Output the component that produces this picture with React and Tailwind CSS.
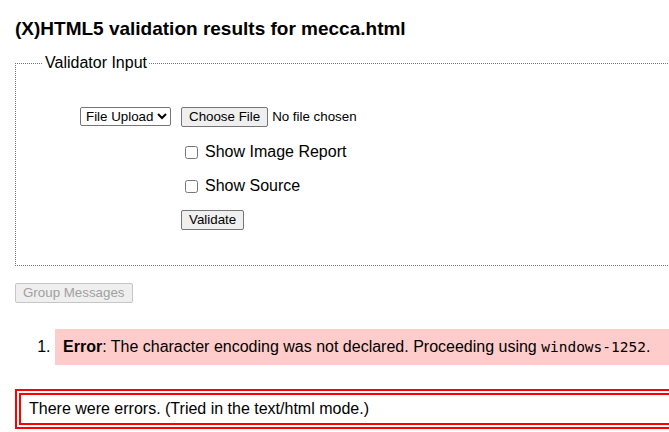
import React from 'react';

const App = () => {
  return (
    <div className="w-[669px] h-[432px] overflow-hidden bg-white text-black font-['Liberation_Sans',Arial,sans-serif]">
      <div className="w-[780px] pl-[15px]">
        {/* Titulo */}
        <h2 className="pt-[18px] text-[19px] leading-[22px] font-bold">(X)HTML5 validation results for mecca.html</h2>

        {/* Validator Input */}
        <fieldset className="mt-[14px] border border-dotted border-[#767676]">
          <legend className="ml-[27px] px-[2px] text-[16px] leading-[18px]">Validator Input</legend>
          <div className="pt-[35px] pb-[35px] pl-[64px] flex flex-col text-[13.33px]">
            <div className="flex items-start h-[20px]">
              <div className="w-[101px]">
                <select className="h-[19px] border border-[#767676] rounded-[2px] bg-white text-[13.33px] pl-[1px]">
                  <option>File Upload</option>
                </select>
              </div>
              <button className="h-[20px] px-[7px] border border-[#767676] rounded-[2px] bg-[#efefef] leading-[16px]">Choose File</button>
              <span className="ml-[4px] leading-[20px]">No file chosen</span>
            </div>
            <label className="mt-[16px] ml-[101px] flex items-center h-[18px] text-[16px]">
              <input type="checkbox" className="ml-[4px] w-[13px] h-[13px]" />
              <span className="ml-[7px]">Show Image Report</span>
            </label>
            <label className="mt-[16px] ml-[101px] flex items-center h-[18px] text-[16px]">
              <input type="checkbox" className="ml-[4px] w-[13px] h-[13px]" />
              <span className="ml-[7px]">Show Source</span>
            </label>
            <div className="mt-[15px] ml-[101px]">
              <button className="h-[20px] px-[7px] border border-[#767676] rounded-[2px] bg-[#efefef] leading-[16px]">Validate</button>
            </div>
          </div>
        </fieldset>

        <button disabled className="mt-[17px] h-[20px] px-[7px] border border-[#c6c6c6] rounded-[2px] bg-[#efefef] text-[#a0a0a0] text-[13.33px] leading-[16px]">Group Messages</button>

        {/* Mensagens */}
        <ol className="mt-[25px] pl-[40px] list-decimal">
          <li className="bg-[#ffcccc] pl-[8px] py-[8px] text-[16px] leading-[19px]">
            <strong>Error</strong>: The character encoding was not declared. Proceeding using <code className="font-['DejaVu_Sans_Mono',monospace] text-[14.5px]">windows-1252</code>.
          </li>
        </ol>

        <div className="mt-[24px] border-[6px] border-double border-[#ff0000] h-[40px] pl-[8px] text-[16px] leading-[28px]">
          There were errors. (Tried in the text/html mode.)
        </div>
      </div>
    </div>
  );
};

export default App;
